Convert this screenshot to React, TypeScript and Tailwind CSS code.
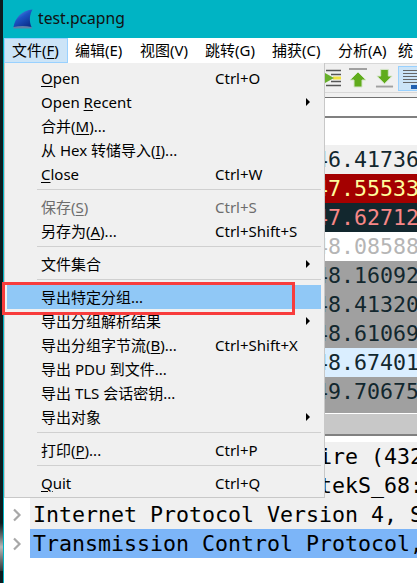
const sans = "font-['Noto_Sans','Noto_Sans_CJK_SC',sans-serif]";

// hidden part of the capture sits behind the open menu, first digit is clipped by it
const packets = [
  { t: "46.41736", row: "h-[29px] bg-[#f0f0f0] text-[#12272e]" },
  { t: "47.55533", row: "h-[29px] bg-[#a40000] text-[#fffc9c]" },
  { t: "47.62712", row: "h-[29px] bg-[#12272e] text-[#f78787]" },
  { t: "48.08588", row: "h-[29px] bg-white text-[#b5b5b5]" },
  { t: "48.16092", row: "h-[29px] bg-[#a0a0a0] text-[#12272e]" },
  { t: "48.41320", row: "h-[29px] bg-[#a0a0a0] text-[#12272e]" },
  { t: "48.61069", row: "h-[29px] bg-[#a0a0a0] text-[#12272e]" },
  { t: "48.67401", row: "h-[29px] bg-[#daeeff] text-[#12272e]" },
  { t: "49.70675", row: "h-[36px] bg-[#a0a0a0] text-[#12272e]" },
];

function U({ children }: { children: string }) {
  return <span className="underline underline-offset-[2px] decoration-1">{children}</span>;
}

function Item({
  children,
  shortcut,
  sub,
  disabled,
  active,
}: {
  children: React.ReactNode;
  shortcut?: string;
  sub?: boolean;
  disabled?: boolean;
  active?: boolean;
}) {
  return (
    <div
      className={`flex items-center h-[24px] pl-[34px] pr-[11px] whitespace-nowrap ${active ? "bg-[#90c8f6]" : ""} ${
        disabled ? "text-[#6d6d6d]" : "text-black"
      }`}
    >
      <span className="w-[174px]">{children}</span>
      <span className="flex-1">{shortcut}</span>
      {sub && <span className="w-0 h-0 border-y-[4px] border-y-transparent border-l-[4px] border-l-black" />}
    </div>
  );
}

function Sep() {
  return (
    <div className="h-[9px] pt-[3px] pl-[30px]">
      <div className="h-px bg-[#d0d0d0]" />
    </div>
  );
}

function FileMenu() {
  return (
    <div className="absolute left-[4px] top-[63px] w-[321px] h-[435px] bg-[#f0f0f0] border-r border-b border-l border-[#c8c8c8] pt-[3px] pl-[2px] pr-[3px] text-[15px] leading-[24px]">
      <Item shortcut="Ctrl+O"><U>O</U>pen</Item>
      <Item sub>Open <U>R</U>ecent</Item>
      <Item>合并(<U>M</U>)...</Item>
      <Item>从 Hex 转储导入(<U>I</U>)...</Item>
      <Item shortcut="Ctrl+W"><U>C</U>lose</Item>
      <Sep />
      <Item disabled shortcut="Ctrl+S">保存(<U>S</U>)</Item>
      <Item shortcut="Ctrl+Shift+S">另存为(<U>A</U>)...</Item>
      <Sep />
      <Item sub>文件集合</Item>
      <Sep />
      <Item active>导出特定分组...</Item>
      <Item sub>导出分组解析结果</Item>
      <Item shortcut="Ctrl+Shift+X">导出分组字节流(<U>B</U>)...</Item>
      <Item>导出 PDU 到文件...</Item>
      <Item>导出 TLS 会话密钥...</Item>
      <Item sub>导出对象</Item>
      <Sep />
      <Item shortcut="Ctrl+P">打印(<U>P</U>)...</Item>
      <Sep />
      <Item shortcut="Ctrl+Q"><U>Q</U>uit</Item>
    </div>
  );
}

function Shark() {
  return (
    <svg width="20" height="20" viewBox="0 0 20 20" className="shrink-0">
      <defs>
        <linearGradient id="fin" x1="0" y1="0" x2="0.7" y2="1">
          <stop offset="0" stopColor="#6ea4ea" />
          <stop offset="0.5" stopColor="#1c55c4" />
          <stop offset="1" stopColor="#0c2f8c" />
        </linearGradient>
      </defs>
      <path d="M0.5 18 C2 9 9 1 19.5 0.5 C16.5 6 16 12 18.5 18 Z" fill="url(#fin)" />
      <path d="M0.5 18 C6 16.5 13 16.5 18.5 18 L19 19.5 L0.5 19.5 Z" fill="#5f7fa8" />
    </svg>
  );
}

function ToolbarIcons() {
  return (
    <div className="flex items-center h-[29px] shrink-0 bg-[#f0f0f0] border-b border-[#d8d8d8] pl-[321px] gap-[7px] overflow-hidden">
      <svg width="16" height="18" viewBox="0 0 16 18" className="shrink-0">
        <path d="M1 1.5h15M6 5.5h10M6 12.5h10M1 16.5h15" stroke="#555" strokeWidth="1.5" />
        <path d="M8 9h8" stroke="#f0e040" strokeWidth="3" />
        <path d="M0 4v10l9-5z" fill="#68b02c" />
      </svg>
      <svg width="20" height="20" viewBox="0 0 20 20" className="shrink-0">
        <path d="M1 1h18" stroke="#a0a0a0" strokeWidth="2" />
        <path d="M10 4l8 8h-4v7H6v-7H2z" fill="#60ac1c" stroke="#d4e4c8" strokeWidth="1" />
      </svg>
      <svg width="19" height="20" viewBox="0 0 20 20" className="shrink-0">
        <path d="M10 16l8-8h-4V1H6v7H2z" fill="#60ac1c" stroke="#d4e4c8" strokeWidth="1" />
        <path d="M1 19h18" stroke="#a0a0a0" strokeWidth="2" />
      </svg>
      <div className="-ml-[3px] w-[20px] h-[25px] bg-[#cce4f7] border border-[#99d1ff] pl-[4px] pt-[3px] overflow-hidden flex flex-col gap-[2px] shrink-0">
        <div className="h-px bg-[#666]" />
        <div className="h-px bg-[#666]" />
        <div className="h-px bg-[#666]" />
        <div className="h-px bg-[#666]" />
        <div className="h-px bg-[#666]" />
        <div className="h-[4px] ml-[8px] bg-[#2060b0]" />
      </div>
    </div>
  );
}

function Detail({ text, row }: { text: string; row: string }) {
  return (
    <div className="flex items-center h-[29px] shrink-0 bg-white">
      <svg width="26" height="14" viewBox="0 0 26 14" className="shrink-0">
        <path d="M10 1.5l5.5 5.5-5.5 5.5" fill="none" stroke="#a8a8a8" strokeWidth="2.2" />
      </svg>
      <div className={`flex-1 h-full pl-[3px] leading-[30px] whitespace-pre overflow-hidden ${row}`}>{text}</div>
    </div>
  );
}

export default function App() {
  return (
    <div className={`relative w-[417px] h-[583px] overflow-hidden flex bg-white ${sans}`}>
      {/* sliver of the desktop behind the window */}
      <div className="w-[3px] shrink-0 flex flex-col bg-[#0c1c20]">
        <div className="mt-auto mb-[12px] h-[48px] bg-gradient-to-b from-[#0c1c20] via-[#b8b8b8] to-[#30383a]" />
      </div>

      <div className="flex-1 min-w-0 flex flex-col bg-[#00b4c4]">
        <div className="flex items-center h-[38px] shrink-0 pl-[10px] gap-[5px] text-[15.7px] text-[#111]">
          <Shark />
          <span>test.pcapng</span>
        </div>

        <div className="flex-1 min-h-0 ml-px flex flex-col bg-white">
          <div className="flex items-center h-[26px] shrink-0 text-[15px] text-black whitespace-nowrap border-b border-[#d8d8d8]">
            <span className="h-full px-[7px] w-[64px] bg-[#cce4f7] border border-[#99d1ff] leading-[23px]">文件(<U>F</U>)</span>
            <span className="w-[64px] pl-[7px]">编辑(E)</span>
            <span className="w-[65px] pl-[8px]">视图(V)</span>
            <span className="w-[68px] pl-[8px]">跳转(G)</span>
            <span className="w-[66px] pl-[7px]">捕获(C)</span>
            <span className="w-[66px] pl-[7px]">分析(A)</span>
            <span className="pl-[1px]">统</span>
          </div>

          <ToolbarIcons />

          <div className="h-[5px] shrink-0 bg-[#f0f0f0] border-b border-[#707070]" />
          <div className="h-[20px] shrink-0 bg-white border-b-2 border-[#808080]" />
          <div className="h-[27px] shrink-0 bg-white" />

          <div className="font-['DejaVu_Sans_Mono',monospace] text-[21.6px]">
            {packets.map((p) => (
              <div key={p.t} className={`pl-[311px] leading-[29px] whitespace-pre overflow-hidden ${p.row}`}>
                {p.t}
              </div>
            ))}
          </div>
          <div className="h-px shrink-0 bg-white" />
          <div className="h-[20px] shrink-0 bg-[#c8c8c8]" />
          <div className="h-[2px] shrink-0 bg-[#808080]" />
          <div className="h-[6px] shrink-0 bg-white" />

          <div className="font-['DejaVu_Sans_Mono',monospace] text-[21.6px] text-black flex flex-col">
            <Detail text="Frame 6:432 bytes on wire (432 bits)" row="bg-[#f0f0f0]" />
            <Detail text="Ethernet II, Src: RealtekS_68:a0:11" row="bg-[#f0f0f0]" />
            <Detail text="Internet Protocol Version 4, Src: 10.0.0.1" row="bg-[#f0f0f0]" />
            <Detail text="Transmission Control Protocol, Src Port" row="bg-[#7cb5f8]" />
          </div>
        </div>
      </div>

      <FileMenu />
      {/* red annotation box drawn over the screenshot */}
      <div className="absolute left-[2px] top-[282px] w-[293px] h-[33px] border-[3px] border-[#f83c3c]" />
    </div>
  );
}
